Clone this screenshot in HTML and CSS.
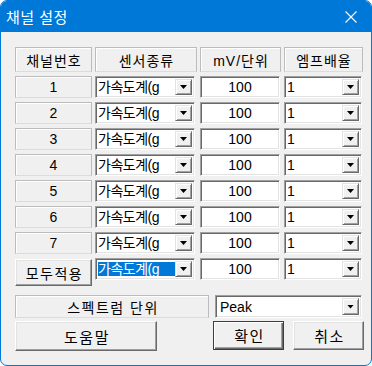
FILE: index.html
```html
<!DOCTYPE html>
<html lang="ko">
<head>
    <meta charset="UTF-8">
    <title>채널 설정</title>
    <link rel="stylesheet" href="styles.css">
</head>
<body>
  <div class="window">
    <div class="titlebar">
      <span class="title">채널 설정</span>
      <svg class="close" width="12" height="12" viewBox="0 0 12 12">
        <path d="M0.5 0.5 L11.5 11.5 M11.5 0.5 L0.5 11.5" stroke="#fff" stroke-width="1.1" fill="none"/>
      </svg>
    </div>

    <div class="content">
      <div class="channel-grid">
        <div class="cell head">채널번호</div>
        <div class="cell head">센서종류</div>
        <div class="cell head">mV/단위</div>
        <div class="cell head">엠프배율</div>

        <div class="cell">1</div>
        <div class="combo sensor"><span class="value">가속도계(g</span><span class="drop"></span></div>
        <div class="edit">100</div>
        <div class="combo"><span class="value">1</span><span class="drop"></span></div>

        <div class="cell">2</div>
        <div class="combo sensor"><span class="value">가속도계(g</span><span class="drop"></span></div>
        <div class="edit">100</div>
        <div class="combo"><span class="value">1</span><span class="drop"></span></div>

        <div class="cell">3</div>
        <div class="combo sensor"><span class="value">가속도계(g</span><span class="drop"></span></div>
        <div class="edit">100</div>
        <div class="combo"><span class="value">1</span><span class="drop"></span></div>

        <div class="cell">4</div>
        <div class="combo sensor"><span class="value">가속도계(g</span><span class="drop"></span></div>
        <div class="edit">100</div>
        <div class="combo"><span class="value">1</span><span class="drop"></span></div>

        <div class="cell">5</div>
        <div class="combo sensor"><span class="value">가속도계(g</span><span class="drop"></span></div>
        <div class="edit">100</div>
        <div class="combo"><span class="value">1</span><span class="drop"></span></div>

        <div class="cell">6</div>
        <div class="combo sensor"><span class="value">가속도계(g</span><span class="drop"></span></div>
        <div class="edit">100</div>
        <div class="combo"><span class="value">1</span><span class="drop"></span></div>

        <div class="cell">7</div>
        <div class="combo sensor"><span class="value">가속도계(g</span><span class="drop"></span></div>
        <div class="edit">100</div>
        <div class="combo"><span class="value">1</span><span class="drop"></span></div>

        <button class="btn apply-all">모두적용</button>
        <div class="combo sensor"><span class="value selected">가속도계(g</span><span class="drop"></span></div>
        <div class="edit">100</div>
        <div class="combo"><span class="value">1</span><span class="drop"></span></div>
      </div>

      <div class="unit-row">
        <div class="cell unit-label">스펙트럼 단위</div>
        <div class="combo unit-combo"><span class="value">Peak</span><span class="drop"></span></div>
      </div>

      <div class="button-row">
        <button class="btn help">도움말</button>
        <button class="btn ok default">확인</button>
        <button class="btn cancel">취소</button>
      </div>
    </div>
  </div>
</body>
</html>
```

FILE: styles.css
```css
* {
  box-sizing: border-box;
}

html, body {
  margin: 0;
  background: #fff;
}

body {
  font-family: "Liberation Sans", "Noto Sans CJK KR", sans-serif;
  font-size: 14px;
  color: #000;
}

:root {
  --win-blue: #0078d7;
  --face: #f0f0f0;
  --shadow: #a0a0a0;
  --dark-shadow: #696969;
  --light: #e3e3e3;
}

/* window frame */
.window {
  width: 372px;
  height: 366px;
  border: 1px solid var(--win-blue);
  border-radius: 7px;
  background: var(--face);
  overflow: hidden;
  display: flex;
  flex-direction: column;
}

.titlebar {
  height: 31px;
  flex: none;
  background: var(--win-blue);
  color: #fff;
  display: flex;
  align-items: center;
  justify-content: space-between;
  padding: 0 14px 0 5px;
}
.title {
  font-family: "Noto Sans CJK KR", sans-serif;
  font-size: 15px;
  letter-spacing: 0.5px;
}

.content {
  padding: 15px 8px 0 14px;
}

/* channel table */
.channel-grid {
  display: grid;
  grid-template-columns: 77px 102px 81px 79px;
  grid-template-rows: 25px repeat(8, 22px);
  column-gap: 3px;
  row-gap: 4px;
}

.cell {
  display: flex;
  align-items: center;
  justify-content: center;
  border: 1px solid #bcbcbc;
  border-bottom-color: #dcdcdc;
  box-shadow: inset 1px 1px #fff;
  white-space: nowrap;
}
.cell.head {
  letter-spacing: 1px;
  padding-left: 1px;
}

/* sunken edit / combo */
.edit,
.combo {
  background: #fff;
  border: 1px solid;
  border-color: var(--shadow) #fff #fff var(--shadow);
  box-shadow: inset 1px 1px var(--dark-shadow), inset -1px -1px var(--light);
  padding: 2px;
  display: flex;
  align-items: center;
  margin-right: 1px;
}
.edit {
  justify-content: center;
}
.combo.sensor {
  width: 100px;
}

.combo .value {
  flex: 1;
  min-width: 0;
  overflow: hidden;
  white-space: nowrap;
  letter-spacing: -0.5px;
  line-height: 16px;
  align-self: stretch;
  display: flex;
  align-items: center;
}
.combo .value.selected {
  background: var(--win-blue);
  color: #fff;
  margin: 1px 0;
}

.drop {
  flex: none;
  width: 17px;
  align-self: stretch;
  background: var(--face);
  border: 1px solid;
  border-color: var(--light) var(--dark-shadow) var(--dark-shadow) var(--light);
  box-shadow: inset 1px 1px #fff, inset -1px -1px var(--shadow);
  display: flex;
  align-items: center;
  justify-content: center;
}
.drop::after {
  content: "";
  width: 7px;
  height: 4px;
  background: #000;
  clip-path: polygon(0 0, 100% 0, 50% 100%);
}

/* push buttons */
.btn {
  font-family: "Noto Sans CJK KR", sans-serif;
  font-size: 15px;
  letter-spacing: 1.5px;
  padding: 0 0 0 2px;
  color: #000;
  background: var(--face);
  border: 1px solid;
  border-color: #fff var(--dark-shadow) var(--dark-shadow) #fff;
  box-shadow: inset -1px -1px var(--shadow), inset 1px 1px var(--light);
  border-radius: 0;
}
.btn.default {
  border-color: #3c3c3c;
  box-shadow: inset 1px 1px #fff, inset -1px -1px var(--dark-shadow), inset -2px -2px var(--shadow);
}
.apply-all {
  height: 27px;
  margin-top: 1px;
  font-size: 14px;
}

/* spectrum unit */
.unit-row {
  display: flex;
  gap: 6px;
  margin-top: 15px;
  height: 23px;
}
.unit-label {
  width: 194px;
  font-family: "Noto Sans CJK KR", sans-serif;
  letter-spacing: 1.5px;
  padding-left: 2px;
}
.unit-combo {
  width: 147px;
}
.unit-combo .value {
  padding-left: 2px;
  letter-spacing: 0;
}

.button-row {
  display: flex;
  margin-top: 3px;
  margin-right: -1px;
}
.help {
  width: 142px;
  height: 30px;
}
.ok {
  width: 71px;
  height: 29px;
  margin-left: auto;
}
.cancel {
  width: 71px;
  height: 29px;
  margin-left: 9px;
}
```
